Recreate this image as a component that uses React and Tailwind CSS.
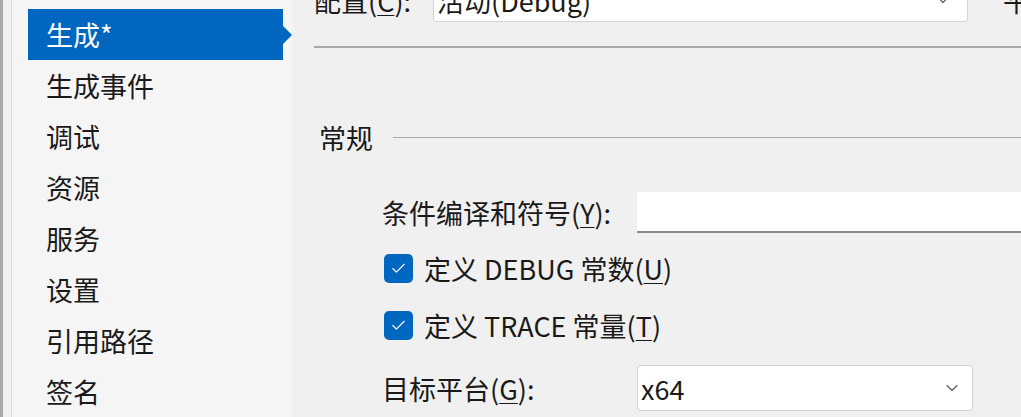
import { ChevronDown, Check } from 'lucide-react';

const items = ['生成*', '生成事件', '调试', '资源', '服务', '设置', '引用路径', '签名'];

function Key({ children }) {
  return <span className="underline decoration-1 underline-offset-[3px]">{children}</span>;
}

function CheckRow({ children }) {
  return (
    <div className="flex h-[57px] items-center pl-[70px]">
      <span className="flex h-[29px] w-[29px] shrink-0 items-center justify-center rounded-[5px] bg-[#0067c0]">
        <Check size={17} strokeWidth={1.6} className="text-white" />
      </span>
      <span className="ml-[11px] leading-none">{children}</span>
    </div>
  );
}

export default function App() {
  return (
    <div
      className="flex h-[417px] w-[1021px] overflow-hidden bg-[#f0f0f0] text-[27px] text-[#1a1a1a]"
      style={{ fontFamily: '"Noto Sans CJK SC", "Noto Sans", sans-serif' }}
    >
      <div className="flex shrink-0">
        <div className="w-[3px] bg-[#a9a9a9]" />
        <div className="w-[8px] bg-[#f0f0f0]" />
        <div className="w-[1px] bg-[#d9d9e0]" />
        <nav className="w-[280px] bg-[#f5f5f5] pt-[9px] pl-[16px]">
          {items.map((item, i) => (
            <div
              key={item}
              className={
                i === 0
                  ? 'relative flex h-[51px] w-[255px] items-center bg-[#0067c0] pl-[18px] text-white'
                  : 'flex h-[51px] w-[255px] items-center pl-[18px]'
              }
            >
              <span className="leading-none">{item}</span>
              {i === 0 && (
                <span className="absolute top-[17px] right-[-9px] h-0 w-0 border-y-[9px] border-l-[9px] border-y-transparent border-l-[#0067c0]" />
              )}
            </div>
          ))}
        </nav>
      </div>

      <main className="min-w-0 flex-1 pl-[22px]">
        <div className="mt-[-22px] flex h-[44px] items-center">
          <span className="w-[119px] shrink-0 leading-none">
            配置(<Key>C</Key>):
          </span>
          <div className="flex h-[44px] w-[535px] shrink-0 items-center justify-between rounded-[3px] border border-[#d4d4d4] bg-white pl-[3px] pr-[14px]">
            <span className="leading-none">活动(Debug)</span>
            <ChevronDown size={20} strokeWidth={1.5} className="text-[#606060]" />
          </div>
          <span className="ml-[35px] shrink-0 leading-none">平台(M):</span>
        </div>

        <div className="mt-[24px] h-[2px] bg-[#a8a8a8]" />

        <div className="mt-[76px] flex h-[26px] items-center">
          <span className="ml-[5px] leading-none">常规</span>
          <div className="ml-[20px] h-[1px] flex-1 bg-[#a8a8a8]" />
        </div>

        <div className="mt-[42px] flex h-[41px] items-center pl-[68px]">
          <span className="w-[255px] shrink-0 leading-none">
            条件编译和符号(<Key>Y</Key>):
          </span>
          <div className="h-[41px] flex-1 border-b-2 border-[#8a8a8a] bg-white" />
        </div>

        <div className="mt-[7px]">
          <CheckRow>
            定义 DEBUG 常数(<Key>U</Key>)
          </CheckRow>
          <CheckRow>
            定义 TRACE 常量(<Key>T</Key>)
          </CheckRow>
        </div>

        <div className="mt-[11px] flex h-[46px] items-center pl-[68px]">
          <span className="w-[255px] shrink-0 leading-none">
            目标平台(<Key>G</Key>):
          </span>
          <div className="flex h-[46px] w-[336px] shrink-0 items-center justify-between rounded-[3px] border border-[#d4d4d4] bg-white pl-[3px] pr-[10px]">
            <span className="leading-none">x64</span>
            <ChevronDown size={20} strokeWidth={1.5} className="text-[#606060]" />
          </div>
        </div>
      </main>
    </div>
  );
}
